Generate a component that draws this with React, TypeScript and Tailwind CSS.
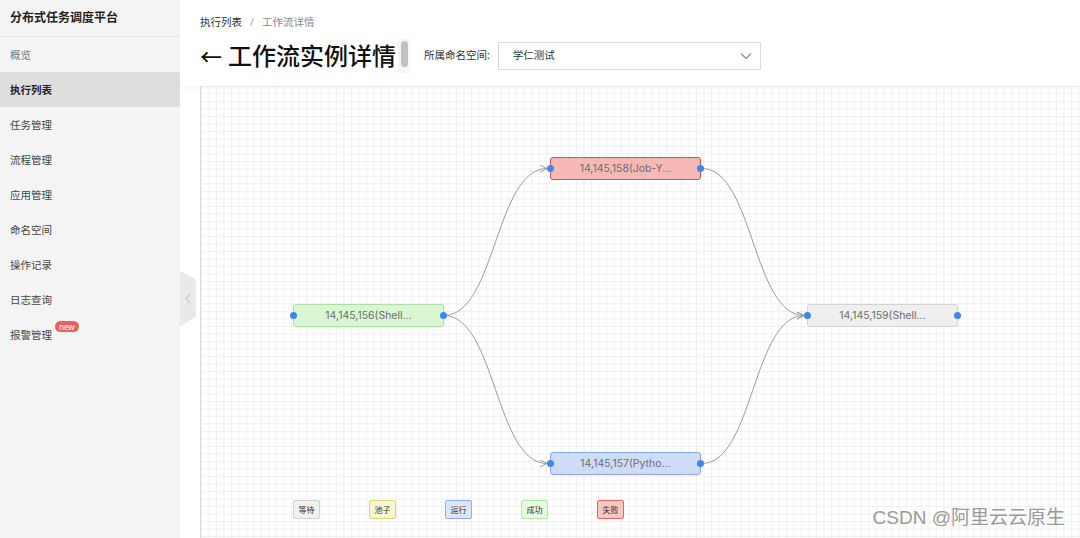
import React from "react";

const menu = ["概览", "执行列表", "任务管理", "流程管理", "应用管理", "命名空间", "操作记录", "日志查询", "报警管理"];

interface NodeProps {
  left: number;
  top: number;
  label: string;
  className: string;
}

const FlowNode: React.FC<NodeProps> = ({ left, top, label, className }) => {
  return (
    <div
      className={`absolute flex h-[23px] w-[151px] items-center justify-center rounded-[3px] border font-['Inter','Noto_Sans',sans-serif] text-[10.5px] text-[#6e6e6e] ${className}`}
      style={{ left, top }}
    >
      {label}
      <span className="absolute left-[-4px] top-[7px] h-[7px] w-[7px] rounded-full bg-[#3f87e8]" />
      <span className="absolute right-[-4px] top-[7px] h-[7px] w-[7px] rounded-full bg-[#3f87e8]" />
    </div>
  );
};

const legend = [
  { label: "等待", cls: "bg-[#f1f1f1] border-[#d2d2d2]" },
  { label: "池子", cls: "bg-[#f8f6cc] border-[#dcd67e]" },
  { label: "运行", cls: "bg-[#dde6fb] border-[#91acec]" },
  { label: "成功", cls: "bg-[#e6fae1] border-[#b3e8a8]" },
  { label: "失败", cls: "bg-[#f9c6c2] border-[#e0665f]" },
];

function edge(x1: number, y1: number, x2: number, y2: number) {
  const mx = (x1 + x2) / 2;
  return `M${x1},${y1} C${mx},${y1} ${mx},${y2} ${x2},${y2}`;
}

export default function App() {
  return (
    <div className="flex h-[538px] w-[1080px] overflow-hidden bg-white font-['Noto_Sans','Noto_Sans_CJK_SC',sans-serif]">
      <aside className="relative z-10 w-[180px] shrink-0 bg-[#f4f4f4]">
        <div className="flex h-[37px] items-center border-b border-[#e6e6e6] pl-[10px] text-[12px] font-bold text-[#222]">
          分布式任务调度平台
        </div>
        <nav>
          {menu.map((m) => (
            <div
              key={m}
              className={`relative flex h-[35px] items-center pl-[10px] pt-[2px] text-[10.5px] ${
                m === "执行列表" ? "bg-[#dedede] font-semibold text-[#222]" : m === "概览" ? "text-[#777]" : "text-[#444]"
              }`}
            >
              {m}
              {m === "报警管理" && (
                <span className="absolute left-[55px] top-[4px] rounded-full bg-[#e8615b] px-[4px] text-[8px] leading-[11px] text-white">
                  new
                </span>
              )}
            </div>
          ))}
        </nav>
        <div className="absolute right-[-16px] top-[271px] flex h-[55px] w-[16px] items-center justify-center bg-[#e9e9e9] [clip-path:polygon(0_0,100%_16%,100%_84%,0_100%)]">
          <svg width="6" height="11" viewBox="0 0 6 11" fill="none">
            <path d="M5 1 L1 5.5 L5 10" stroke="#b5b5b5" strokeWidth="1" />
          </svg>
        </div>
      </aside>

      <main className="flex flex-1 flex-col">
        <header className="relative z-[5] h-[86px] shrink-0 bg-white px-[20px] pt-[15px] shadow-[0_2px_6px_rgba(0,0,0,0.05)]">
          <div className="flex items-center text-[10.5px] text-[#333]">
            <span>执行列表</span>
            <span className="mx-[8px] text-[#aaa]">/</span>
            <span className="text-[#888]">工作流详情</span>
          </div>
          <div className="mt-[8px] flex items-center">
            <div className="flex items-center text-[24px] font-medium leading-[34px] text-[#111]">
              <span className="mr-[6px] text-[22px]">←</span>
              工作流实例详情
            </div>
            <div className="ml-[2px] flex h-[34px] w-[12px] justify-center bg-[#f6f6f6] pt-[2px]">
              <div className="h-[26px] w-[7px] rounded-full bg-[#c1c1c1]" />
            </div>
            <span className="ml-[14px] text-[10.5px] text-[#333]">所属命名空间:</span>
            <div className="ml-[8px] flex h-[28px] w-[263px] items-center justify-between border border-[#dcdcdc] pl-[14px] pr-[8px] text-[10.5px] text-[#333]">
              <span>学仁测试</span>
              <svg width="12" height="8" viewBox="0 0 12 8" fill="none">
                <path d="M1 1.5 L6 6.5 L11 1.5" stroke="#888" strokeWidth="1.1" />
              </svg>
            </div>
          </div>
        </header>

        <div className="flex flex-1">
          <div className="w-[20px] shrink-0 bg-white" />
          <div className="relative flex-1 border-l border-[#dcdcdc] bg-white bg-[linear-gradient(to_right,#f0f0f0_1px,transparent_1px),linear-gradient(to_bottom,#f0f0f0_1px,transparent_1px)] bg-[size:7.5px_7.5px]">
            <svg className="absolute left-0 top-0" width="880" height="452" fill="none">
              <defs>
                <marker id="arr" markerWidth="8" markerHeight="8" refX="7" refY="4" orient="auto" markerUnits="userSpaceOnUse">
                  <path d="M0,0.5 L7,4 L0,7.5" stroke="#9a9a9a" strokeWidth="1" fill="none" />
                </marker>
              </defs>
              <g stroke="#9d9d9d" strokeWidth="1">
                <path d={edge(243, 229.5, 346, 82.5)} markerEnd="url(#arr)" />
                <path d={edge(243, 229.5, 346, 377.5)} markerEnd="url(#arr)" />
                <path d={edge(501, 82.5, 603, 229.5)} markerEnd="url(#arr)" />
                <path d={edge(501, 377.5, 603, 229.5)} markerEnd="url(#arr)" />
              </g>
            </svg>

            <FlowNode left={92} top={218} label="14,145,156(Shell..." className="bg-[#d9f7d2] border-[#a9e49f]" />
            <FlowNode left={349} top={71} label="14,145,158(Job-Y..." className="bg-[#f7b9b5] border-[#df5049]" />
            <FlowNode left={606} top={218} label="14,145,159(Shell..." className="bg-[#efefef] border-[#d3d3d3]" />
            <FlowNode left={349} top={366} label="14,145,157(Pytho..." className="bg-[#cfdcf7] border-[#8ba8e6]" />

            <div className="absolute left-[92px] top-[414px] flex gap-[49px]">
              {legend.map((l) => (
                <div
                  key={l.label}
                  className={`flex h-[19px] w-[27px] items-center justify-center rounded-[2px] border text-[8px] text-[#333] ${l.cls}`}
                >
                  {l.label}
                </div>
              ))}
            </div>

            <div className="absolute bottom-[6px] right-[15px] font-['Liberation_Sans','Noto_Sans_CJK_SC',sans-serif] text-[19px] text-[#9a9a9a]">
              CSDN @阿里云云原生
            </div>
          </div>
        </div>
      </main>
    </div>
  );
}
